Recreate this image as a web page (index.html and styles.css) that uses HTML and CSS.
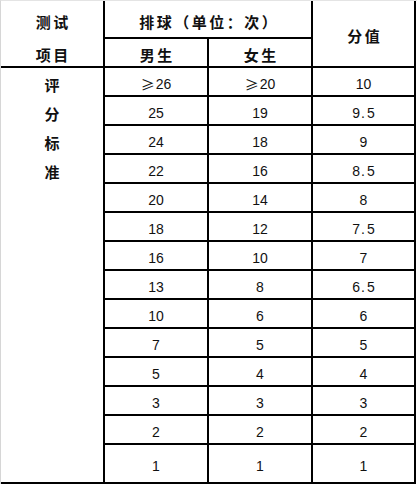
FILE: index.html
```html
<!DOCTYPE html>
<html lang="zh">
<head>
<meta charset="utf-8">
<title>排球评分标准</title>
<link rel="stylesheet" href="styles.css">
</head>
<body>
<div class="sheet">
  <div class="grid">
    <div class="c hd item"><div class="r1">测试</div><div class="r2">项目</div></div>
    <div class="c hd group">排球（单位：次）</div>
    <div class="c hd score">分值</div>
    <div class="c hd male">男生</div>
    <div class="c hd female">女生</div>
    <div class="c side"><span>评</span><span>分</span><span>标</span><span>准</span></div>

    <div class="c n"><span class="ge">≥</span>26</div><div class="c n"><span class="ge">≥</span>20</div><div class="c n s">10</div>
    <div class="c n">25</div><div class="c n">19</div><div class="c n s">9<span class="dot">.</span>5</div>
    <div class="c n">24</div><div class="c n">18</div><div class="c n s">9</div>
    <div class="c n">22</div><div class="c n">16</div><div class="c n s">8<span class="dot">.</span>5</div>
    <div class="c n">20</div><div class="c n">14</div><div class="c n s">8</div>
    <div class="c n">18</div><div class="c n">12</div><div class="c n s">7<span class="dot">.</span>5</div>
    <div class="c n">16</div><div class="c n">10</div><div class="c n s">7</div>
    <div class="c n">13</div><div class="c n">8</div><div class="c n s">6<span class="dot">.</span>5</div>
    <div class="c n">10</div><div class="c n">6</div><div class="c n s">6</div>
    <div class="c n">7</div><div class="c n">5</div><div class="c n s">5</div>
    <div class="c n">5</div><div class="c n">4</div><div class="c n s">4</div>
    <div class="c n">3</div><div class="c n">3</div><div class="c n s">3</div>
    <div class="c n">2</div><div class="c n">2</div><div class="c n s">2</div>
    <div class="c n">1</div><div class="c n">1</div><div class="c n s">1</div>
  </div>
</div>
</body>
</html>
```
FILE: styles.css
```css
html, body {
  margin: 0;
  padding: 0;
  background: #fff;
}
.sheet {
  width: 416px;
  border-left: 1px solid #d6d6d6;
  border-top: 1px solid #e4e4e4;
}
.grid {
  display: grid;
  grid-template-columns: 102px 102px 102px 101px;
  grid-template-rows: 36px 27px repeat(13, 27px) 37px;
  gap: 2px;
  background: #000;
  border-right: 2px solid #000;
  border-bottom: 2px solid #000;
  width: fit-content;
}
.c {
  background: #fff;
  display: flex;
  align-items: center;
  justify-content: center;
  color: #111;
}
.hd {
  font-family: "Noto Sans CJK SC", sans-serif;
  font-weight: 700;
  font-size: 15px;
  letter-spacing: 2.5px;
  padding-top: 4px;
  padding-left: 2.5px;
  box-sizing: border-box;
}
.item {
  grid-column: 1;
  grid-row: 1 / span 2;
  flex-direction: column;
  justify-content: flex-start;
  padding-top: 0;
}
.item .r1 {
  height: 36px;
  display: flex;
  align-items: center;
  padding-top: 4px;
  box-sizing: border-box;
}
.item .r2 {
  height: 29px;
  display: flex;
  align-items: center;
  padding-top: 5px;
  box-sizing: border-box;
}
.group {
  grid-column: 2 / span 2;
  grid-row: 1;
}
.score {
  grid-column: 4;
  grid-row: 1 / span 2;
}
.male {
  grid-column: 2;
  grid-row: 2;
}
.female {
  grid-column: 3;
  grid-row: 2;
}
.side {
  grid-column: 1;
  grid-row: 3 / span 14;
  flex-direction: column;
  justify-content: flex-start;
  font-family: "Noto Sans CJK SC", sans-serif;
  font-weight: 700;
  font-size: 15px;
  padding-top: 2px;
}
.side span {
  display: block;
  height: 29px;
  line-height: 29px;
}
.n {
  font-family: "Liberation Sans", Arial, sans-serif;
  font-size: 14px;
  padding-top: 5px;
  box-sizing: border-box;
}
.ge {
  font-family: "Noto Sans CJK SC", sans-serif;
  font-size: 14px;
  margin-right: 1px;
}
.dot {
  margin: 0 2px 0 1px;
}
```
